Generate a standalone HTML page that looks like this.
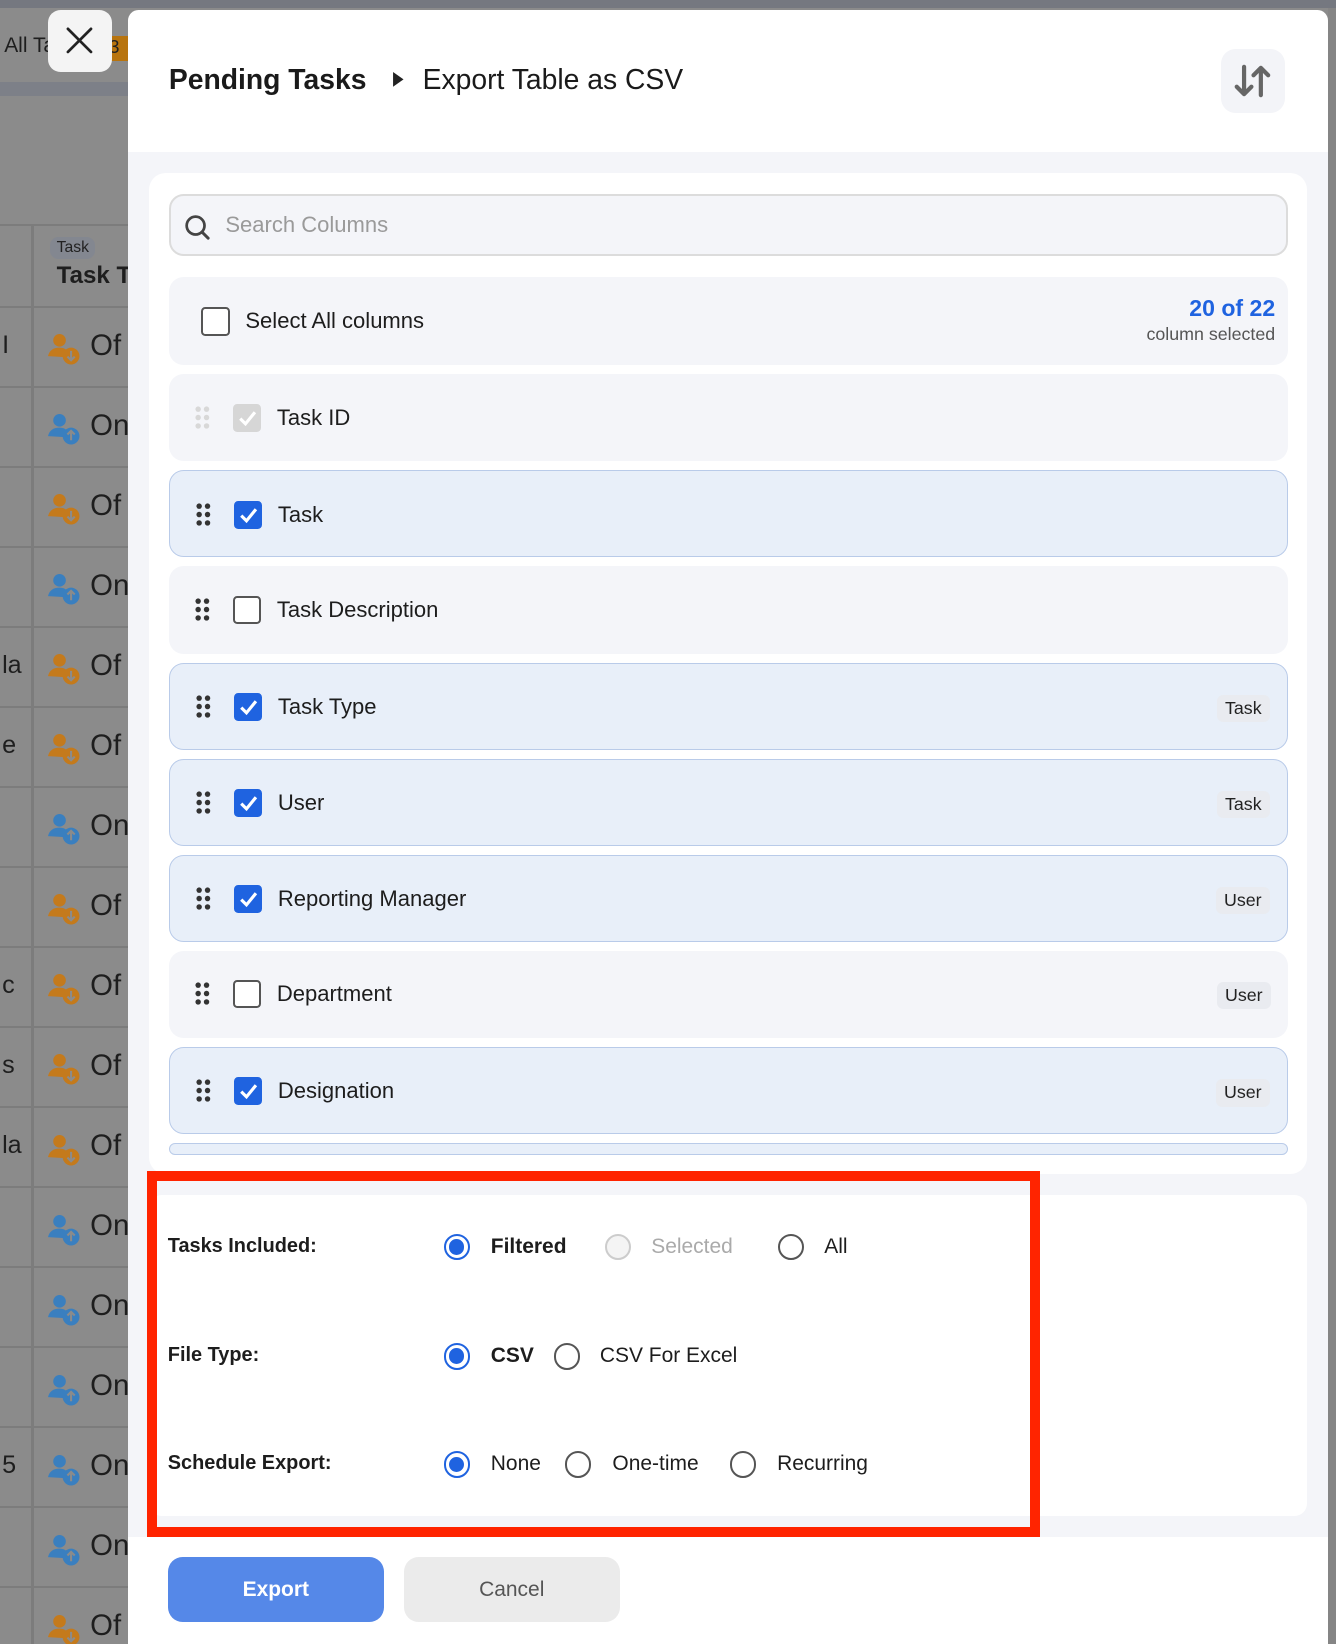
<!DOCTYPE html>
<html><head><meta charset="utf-8"><style>
*{box-sizing:border-box;margin:0;padding:0}
html,body{width:1336px;height:1644px;overflow:hidden}
body{font-family:"Liberation Sans",sans-serif;background:#8a8a8a}
#w{zoom:1.04867;position:relative;width:1274px;height:1568px;background:#8b8b8b;overflow:hidden}
.abs{position:absolute}
.bgrow{position:absolute;left:0;width:122px;height:76px;border-top:2px solid #7c7c7c}
.bgrow .t{position:absolute;left:86px;top:20px;font-size:28px;color:#1e1e1e}
.bgrow .ic{position:absolute;left:46px;top:24px}
.bgrow .l{position:absolute;left:2px;top:22px;font-size:24px;color:#1e1e1e}
.row{position:absolute;left:161px;width:1067px;height:83px;border-radius:14px;background:#f4f5f9}
.row.on{background:#e8eff9;border:1px solid #b9cbe9}
.row .dr{position:absolute;left:25px;top:30px}
.row .cb{position:absolute;left:61px;top:28px;width:27px;height:27px;border-radius:4px;border:2px solid #555;background:#fff}
.row.on .cb{background:#1f63e0;border-color:#1f63e0}
.row .lb{position:absolute;left:103px;top:29px;font-size:21px;color:#1d1d1d}
.row .bd{position:absolute;right:16px;top:30px;background:#e9ebf0;border-radius:6px;padding:3px 8px;font-size:17px;color:#222}
.rad{position:absolute;width:25px;height:25px;border-radius:50%;border:2px solid #555;background:#fff}
.rad.s{border-color:#1f63e0}
.rad.s:after{content:"";position:absolute;left:3px;top:3px;width:15px;height:15px;border-radius:50%;background:#1f63e0}
.rad.d{border-color:#ccc;background:#f4f4f4}
.ot{position:absolute;font-size:20px;color:#1d1d1d}
</style></head><body><div id="w">
<div class="abs" style="left:0;top:0;width:1274px;height:8px;background:#757880"></div>
<div class="abs" style="left:0;top:78px;width:122px;height:14px;background:#7d8088"></div>
<div class="abs" style="left:4px;top:32px;font-size:20px;color:#1e1e1e">All Ta</div>
<div class="abs" style="left:104px;top:34px;width:18px;height:24px;background:#b8740e;font-size:18px;color:#222">3</div>
<div class="abs" style="left:0;top:214px;width:122px;height:78px;border-top:2px solid #7c7c7c"></div>
<div class="abs" style="left:30px;top:214px;width:2px;height:1354px;background:#7c7c7c"></div>
<div class="abs" style="left:48px;top:226px;background:#838790;border-radius:8px;padding:2px 6px;font-size:15px;color:#222">Task</div>
<div class="abs" style="left:54px;top:250px;font-size:23px;font-weight:bold;color:#1e1e1e">Task T</div>
<div id="bgrows"></div>
<div class="abs" style="left:1266px;top:8px;width:8px;height:1560px;background:#858585"></div>
<div class="abs" style="left:46px;top:10px;width:61px;height:59px;background:#f4f4f4;border-radius:12px">
<svg width="61" height="59"><path d="M19 18 L41 40 M41 18 L19 40" stroke="#222" stroke-width="2.6" stroke-linecap="round"/></svg></div>
<div class="abs" style="left:122px;top:10px;width:1144px;height:1558px;background:#fff;border-radius:10px 10px 0 0"></div>
<div class="abs" style="left:161px;top:60px;font-size:27px;font-weight:bold;color:#1a1a1a">Pending Tasks</div>
<svg class="abs" style="left:374px;top:68px" width="12" height="16"><path d="M1 1 L11 8 L1 15Z" fill="#222"/></svg>
<div class="abs" style="left:403px;top:60px;font-size:27px;color:#1a1a1a">Export Table as CSV</div>
<div class="abs" style="left:1164px;top:47px;width:61px;height:61px;background:#f3f4f8;border-radius:14px">
<svg width="61" height="61"><g stroke="#666" stroke-width="4" fill="none" stroke-linecap="round" stroke-linejoin="round"><path d="M22 17 V43 M15 36 L22 43 L29 36"/><path d="M38 44 V18 M31 25 L38 18 L45 25"/></g></svg></div>
<div class="abs" style="left:122px;top:145px;width:1144px;height:1321px;background:#f4f5f9"></div>
<div class="abs" style="left:142px;top:165px;width:1104px;height:955px;background:#fff;border-radius:16px;overflow:hidden">
</div>
<div class="abs" style="left:161px;top:185px;width:1067px;height:59px;background:#f4f5f9;border:2px solid #dcdcdc;border-radius:14px">
<svg class="abs" style="left:12px;top:16px" width="28" height="28"><circle cx="12" cy="12" r="8.5" stroke="#444" stroke-width="2.6" fill="none"/><path d="M18.5 18.5 L24 24" stroke="#444" stroke-width="2.8" stroke-linecap="round"/></svg>
<div class="abs" style="left:52px;top:15px;font-size:21px;color:#9a9a9a">Search Columns</div></div>
<div class="row" style="top:264px;height:84px">
<div class="cb" style="left:31px;top:29px;border-color:#555"></div>
<div class="lb" style="left:73px;top:30px">Select All columns</div>
<div class="abs" style="right:12px;top:17px;font-size:22px;font-weight:bold;color:#1f63e0">20 of 22</div>
<div class="abs" style="right:12px;top:45px;font-size:17px;color:#555">column selected</div></div>
<div id="rows"></div>
<div class="abs" style="left:142px;top:1140px;width:1104px;height:306px;background:#fff;border-radius:12px"></div>
<div class="abs" style="left:140px;top:1117px;width:852px;height:349px;border:10px solid #ff2400"></div>
<div class="ot" style="left:160px;top:1178px;font-weight:bold;font-size:19px">Tasks Included:</div>
<div class="rad s" style="left:423px;top:1177px"></div><div class="ot" style="left:468px;top:1178px;font-weight:bold">Filtered</div>
<div class="rad d" style="left:577px;top:1177px"></div><div class="ot" style="left:621px;top:1178px;color:#aaa">Selected</div>
<div class="rad" style="left:742px;top:1177px"></div><div class="ot" style="left:786px;top:1178px">All</div>
<div class="ot" style="left:160px;top:1282px;font-weight:bold;font-size:19px">File Type:</div>
<div class="rad s" style="left:423px;top:1281px"></div><div class="ot" style="left:468px;top:1282px;font-weight:bold">CSV</div>
<div class="rad" style="left:528px;top:1281px"></div><div class="ot" style="left:572px;top:1282px">CSV For Excel</div>
<div class="ot" style="left:160px;top:1385px;font-weight:bold;font-size:19px">Schedule Export:</div>
<div class="rad s" style="left:423px;top:1384px"></div><div class="ot" style="left:468px;top:1385px">None</div>
<div class="rad" style="left:539px;top:1384px"></div><div class="ot" style="left:584px;top:1385px">One-time</div>
<div class="rad" style="left:696px;top:1384px"></div><div class="ot" style="left:741px;top:1385px">Recurring</div>
<div class="abs" style="left:160px;top:1485px;width:206px;height:62px;background:#5588e8;border-radius:14px;color:#fff;font-size:20px;font-weight:bold;text-align:center;line-height:62px">Export</div>
<div class="abs" style="left:385px;top:1485px;width:206px;height:62px;background:#ebebeb;border-radius:14px;color:#555;font-size:20px;text-align:center;line-height:62px">Cancel</div>
</div>
<script>
var s=["Of","On","Of","On","Of","Of","On","Of","Of","Of","Of","On","On","On","On","On","Of"];
var lf={0:"I",4:"la",5:"e",8:"c",9:"s",10:"la",14:"5"};
var h="";
s.forEach(function(t,i){var y=292+i*76.3;var c=t=="Of"?"#c47a1c":"#3a7fbf";
h+='<div class="bgrow" style="top:'+y+'px">'+(lf[i]?'<div class="l">'+lf[i]+'</div>':'')+'<svg class="ic" width="32" height="32"><circle cx="11" cy="7" r="6" fill="'+c+'"/><path d="M0 22 Q2 14 11 14 Q16 14 18 17 L16 23 Z" fill="'+c+'"/><circle cx="22" cy="22" r="8" fill="'+c+'"/><path d="M22 17 V26 M18.5 '+(t=="Of"?'22.5 L22 26 L25.5 22.5':'20.5 L22 17 L25.5 20.5')+'" stroke="#8b8b8b" stroke-width="2" fill="none"/></svg><div class="t">'+t+'</div></div>';});
document.getElementById("bgrows").innerHTML=h;
var r=[["Task ID",2,""],["Task",1,""],["Task Description",0,""],["Task Type",1,"Task"],["User",1,"Task"],["Reporting Manager",1,"User"],["Department",0,"User"],["Designation",1,"User"],["",1,""]];
var g="";
r.forEach(function(x,i){var y=357+i*91.6;var dc=x[1]==2?"#d8d8d8":"#333";
var dots='<svg class="dr" width="14" height="24">';[3,11,19].forEach(function(yy){dots+='<circle cx="3" cy="'+yy+'" r="2.6" fill="'+dc+'"/><circle cx="11" cy="'+yy+'" r="2.6" fill="'+dc+'"/>'});dots+='</svg>';
var cb=x[1]==2?'<div class="cb" style="background:#d6d6d6;border-color:#d6d6d6"><svg width="23" height="23"><path d="M5 12 L10 17 L19 6" stroke="#fff" stroke-width="3" fill="none"/></svg></div>':(x[1]==1?'<div class="cb"><svg width="23" height="23"><path d="M5 12 L10 17 L19 6" stroke="#fff" stroke-width="3" fill="none"/></svg></div>':'<div class="cb"></div>');
var st=i==8?'height:12px;':'';
g+='<div class="row'+(x[1]==1?' on':'')+'" style="top:'+y+'px;'+st+'">'+(i<8?dots+cb+'<div class="lb">'+x[0]+'</div>'+(x[2]?'<div class="bd">'+x[2]+'</div>':''):'')+'</div>';});
document.getElementById("rows").innerHTML=g;
</script>
</body></html>
